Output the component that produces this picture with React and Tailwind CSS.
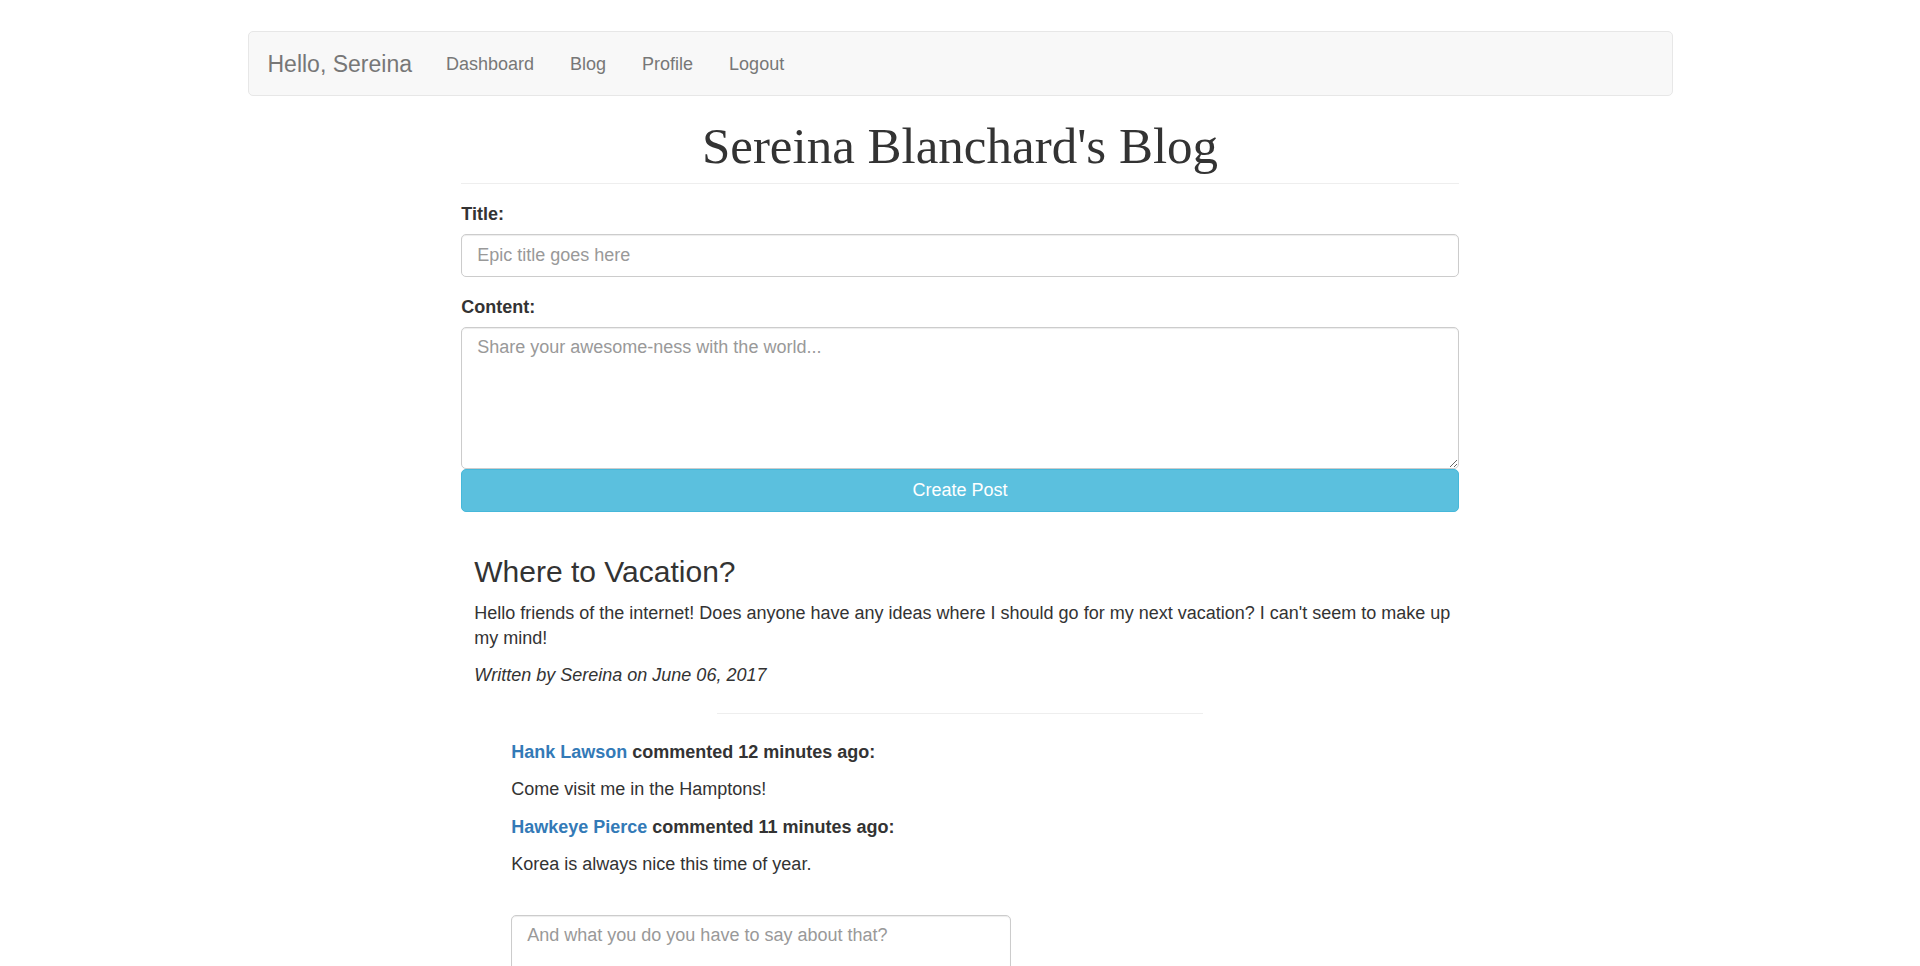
const navLinks = ["Dashboard", "Blog", "Profile", "Logout"];

const comments = [
  { author: "Hank Lawson", when: "12 minutes ago", text: "Come visit me in the Hamptons!" },
  { author: "Hawkeye Pierce", when: "11 minutes ago", text: "Korea is always nice this time of year." },
];

const field =
  "block w-full rounded-[5px] border border-[#ccc] bg-white px-[15px] leading-[25px] text-[#555] placeholder:text-[#999] shadow-[inset_0_1px_1px_rgba(0,0,0,0.075)]";

function Navbar() {
  return (
    <nav className="flex items-center rounded-[5px] border border-[#e7e7e7] bg-[#f8f8f8] pt-5 pb-[18px] pl-[19px] text-[#777]">
      <a href="#home" className="mr-4 text-[23px]">Hello, Sereina</a>
      {navLinks.map((name) => (
        <a key={name} href={"#" + name.toLowerCase()} className="px-[18px]">
          {name}
        </a>
      ))}
    </nav>
  );
}

function PostForm() {
  return (
    <form>
      <label htmlFor="title" className="mb-[7px] block font-bold">Title:</label>
      <input id="title" type="text" placeholder="Epic title goes here" className={field + " py-2"} />
      <label htmlFor="content" className="mt-[18px] mb-[7px] block font-bold">Content:</label>
      <textarea
        id="content"
        placeholder="Share your awesome-ness with the world..."
        className={field + " h-[142px] py-[7px]"}
      />
      <button
        type="button"
        className="block w-full rounded-[5px] border border-[#46b8da] bg-[#5bc0de] py-2 text-white"
      >
        Create Post
      </button>
    </form>
  );
}

function Post() {
  return (
    <article className="mt-[43px] pl-[13px]">
      <h3 className="text-[30px] leading-[34px]">Where to Vacation?</h3>
      <p className="mt-3">
        Hello friends of the internet! Does anyone have any ideas where I should go for my next
        vacation? I can't seem to make up my mind!
      </p>
      <p className="mt-3 italic">Written by Sereina on June 06, 2017</p>
      <div className="pr-[13px]">
        <hr className="mx-auto my-[25px] w-1/2 border-[#eee]" />
        <section className="px-[37px] pt-px">
          {comments.map((c) => (
            <div key={c.author}>
              <p className="mb-3 font-bold">
                <a href="#profile" className="text-[#337ab7]">{c.author}</a> commented {c.when}:
              </p>
              <p className="mb-[13px]">{c.text}</p>
            </div>
          ))}
          <textarea
            rows={3}
            aria-label="Comment"
            placeholder="And what you do you have to say about that?"
            className={field + " mt-[38px] max-w-[500px] py-[7px]"}
          />
        </section>
      </div>
    </article>
  );
}

export default function App() {
  return (
    <div className="min-h-screen bg-white font-['Liberation_Sans',Arial,sans-serif] text-[18px] leading-[25px] text-[#333]">
      <div className="mx-auto w-full max-w-[1425px] pt-[31px]">
        <Navbar />
        <main className="mx-auto w-[70%]">
          <header className="mb-[18px] border-b border-[#eee] pt-[21px] pb-[7px]">
            <h1 className="text-center font-['Liberation_Serif',serif] text-[51px] leading-[59px]">
              Sereina Blanchard's Blog
            </h1>
          </header>
          <PostForm />
          <Post />
        </main>
      </div>
    </div>
  );
}
